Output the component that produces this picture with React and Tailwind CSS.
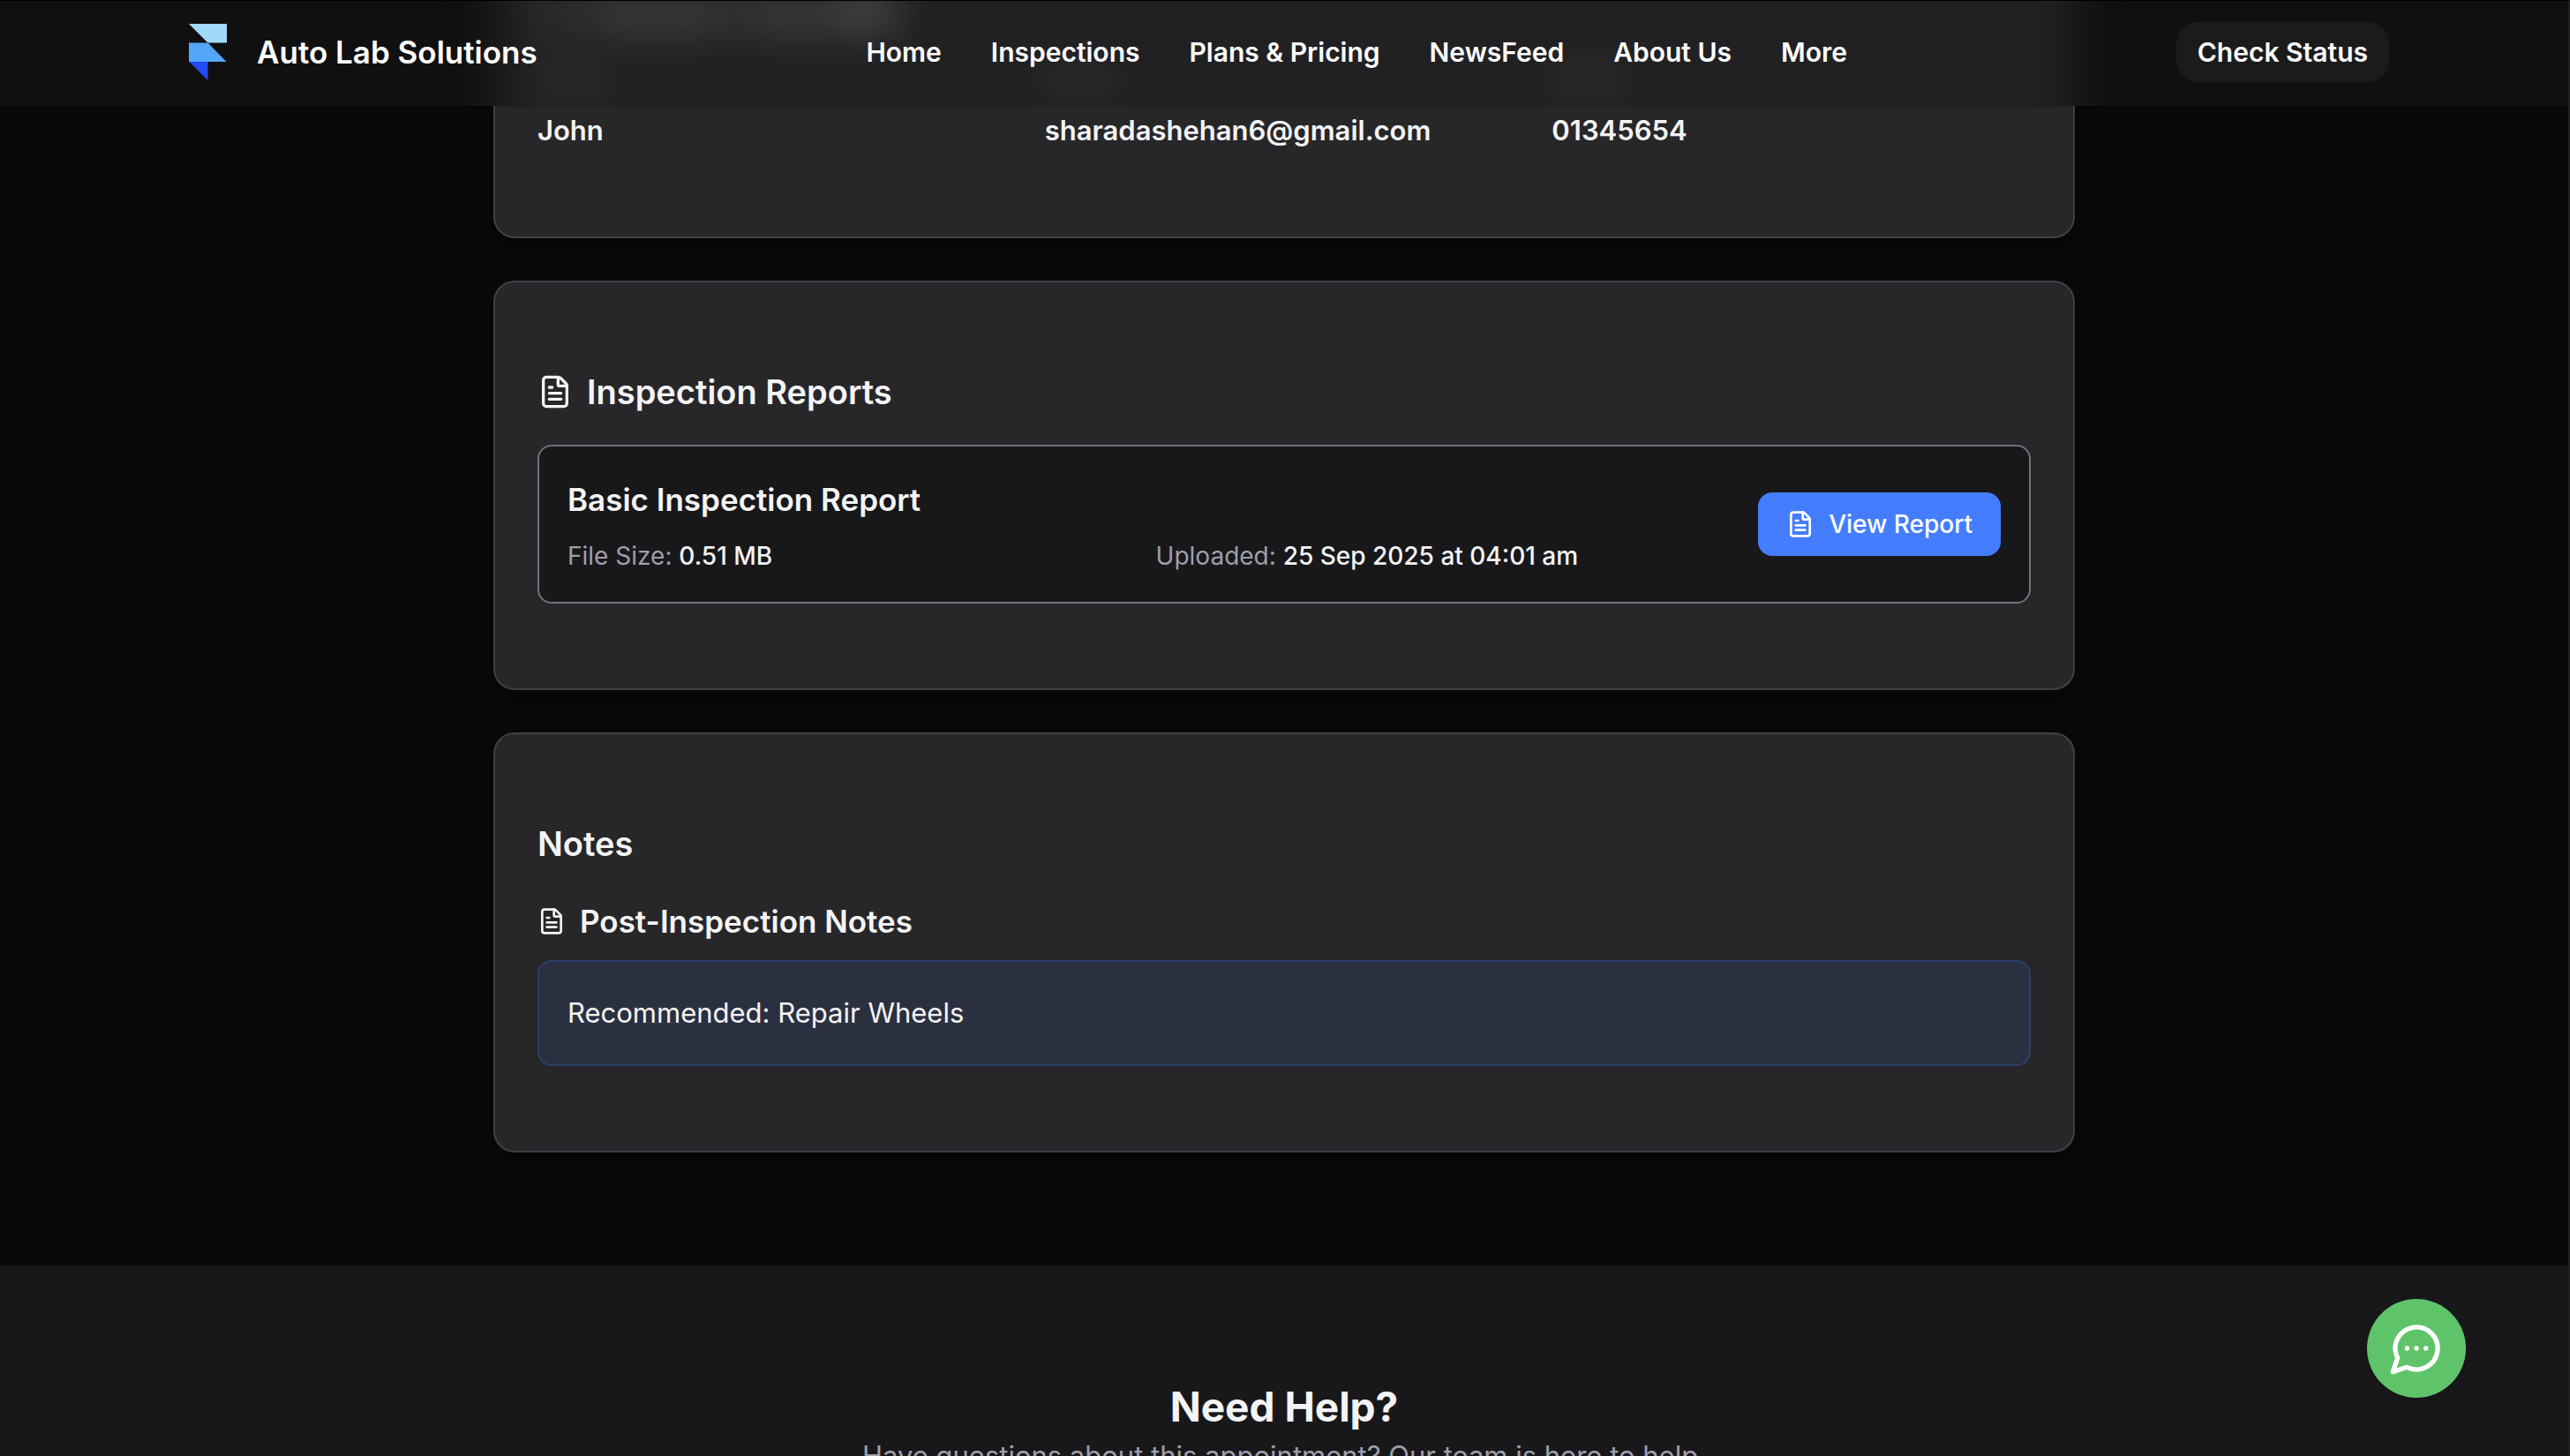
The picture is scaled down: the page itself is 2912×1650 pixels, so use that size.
import { FileText } from "lucide-react";

const NAV = ["Home", "Inspections", "Plans & Pricing", "NewsFeed", "About Us", "More"];

const CONTACT = ["John", "sharadashehan6@gmail.com", "01345654"];

function Logo() {
  return (
    <svg viewBox="0 0 43 64" className="h-16 w-[43px]" aria-hidden="true">
      <path d="M0 0H43V21.5H21.5Z" fill="#a0dafb" />
      <path d="M0 21.5H21.5L42.5 43H0Z" fill="#54a6f9" />
      <path d="M0.5 43H21.5V64Z" fill="#204bf6" />
    </svg>
  );
}

function ChatIcon() {
  return (
    <svg
      viewBox="0 0 24 24"
      className="size-16"
      fill="none"
      stroke="currentColor"
      strokeWidth="2"
      strokeLinecap="round"
      strokeLinejoin="round"
      aria-hidden="true"
    >
      <path d="M7.9 20A9 9 0 1 0 4 16.1L2 22Z" />
      <path d="M8 12h.01" />
      <path d="M12 12h.01" />
      <path d="M16 12h.01" />
    </svg>
  );
}

/* Frosted glass: soft shapes of the card that has scrolled beneath the bar. */
function Frost() {
  return (
    <div className="absolute inset-0 overflow-hidden" aria-hidden="true">
      <div className="absolute -inset-y-24 left-1/2 w-full max-w-[1792px] -translate-x-1/2 bg-[#212123] blur-xl" />
      <div className="absolute inset-0 mx-auto max-w-[1792px]">
        <div className="absolute top-0 left-[50px] h-8 w-10 bg-white/12 blur-xl" />
        <div className="absolute top-0 left-[106px] h-8 w-40 bg-white/17 blur-xl" />
        <div className="absolute top-0 left-[280px] h-8 w-44 bg-white/17 blur-xl" />
        <div className="absolute -top-2 left-[400px] h-8 w-14 bg-white/10 blur-xl" />
        <div className="absolute top-[76px] left-[50px] h-6 w-20 bg-white/8 blur-xl" />
        <div className="absolute top-[76px] left-[625px] h-6 w-20 bg-white/8 blur-xl" />
        <div className="absolute top-[76px] left-[1200px] h-6 w-20 bg-white/8 blur-xl" />
      </div>
    </div>
  );
}

function Header() {
  return (
    <header className="absolute inset-x-0 top-0 z-20 h-[119px] bg-[#101010] pb-1 shadow-sm">
      <Frost />
      <div className="relative mx-auto flex h-full w-full max-w-[2504px] items-center justify-between">
        <a href="#" className="flex items-center gap-[34px] pl-[11px]">
          <Logo />
          <span className="text-[35px] leading-10 font-semibold text-white">Auto Lab Solutions</span>
        </a>
        <nav className="flex items-center gap-14">
          {NAV.map((item) => (
            <a key={item} href="#" className="text-[30px] leading-12 font-semibold text-white">
              {item}
            </a>
          ))}
        </nav>
        <a
          href="#"
          className="rounded-3xl bg-[#1b1b1c] px-6 py-[10px] text-[30px] leading-12 font-semibold text-white"
        >
          Check Status
        </a>
      </div>
    </header>
  );
}

function Card({ children }) {
  return (
    <section className="rounded-3xl border-2 border-[#3f3f46] bg-[#27272a] px-12 py-24 shadow-[0_20px_30px_-6px_rgba(0,0,0,0.3),0_8px_12px_-8px_rgba(0,0,0,0.3)]">
      {children}
    </section>
  );
}

function CardTitle({ icon, children }) {
  return (
    <h2 className="mb-8 flex items-center gap-4 text-[38px] leading-14 font-semibold text-zinc-100">
      {icon}
      {children}
    </h2>
  );
}

export default function App() {
  return (
    <div className="relative h-screen overflow-hidden border-t border-r-2 border-t-black border-r-[#1f1f1c] bg-[#09090b] font-['Inter',sans-serif]">
      <Header />

      <main className="mx-auto flex max-w-[1792px] flex-col gap-12 pt-[25px] pb-32">
        <Card>
          <ul className="grid grid-cols-3 gap-8">
            {CONTACT.map((value) => (
              <li key={value} className="text-[31px] leading-12 font-semibold text-zinc-100">
                {value}
              </li>
            ))}
          </ul>
        </Card>

        <Card>
          <CardTitle icon={<FileText className="size-10" />}>Inspection Reports</CardTitle>
          <article className="flex items-center gap-12 rounded-2xl border-2 border-[#71717b] bg-[#18181b] p-8">
            <div className="flex-1">
              <h3 className="mb-4 text-[35px] leading-14 font-semibold text-zinc-100">Basic Inspection Report</h3>
              <div className="grid grid-cols-2 gap-8 text-[28px] leading-10 text-[#9f9fa9]">
                <p>
                  File Size: <span className="font-medium text-zinc-100">0.51 MB</span>
                </p>
                <p>
                  Uploaded: <span className="font-medium text-zinc-100">25 Sep 2025 at 04:01 am</span>
                </p>
              </div>
            </div>
            <button
              type="button"
              className="flex items-center gap-4 rounded-2xl bg-[#447dff] px-8 py-4 text-[28px] leading-10 font-medium text-white"
            >
              <FileText className="size-8" />
              View Report
            </button>
          </article>
        </Card>

        <Card>
          <CardTitle>Notes</CardTitle>
          <h3 className="mb-4 flex items-center gap-4 text-[35px] leading-14 font-semibold text-zinc-100">
            <FileText className="size-8" />
            Post-Inspection Notes
          </h3>
          <p className="rounded-2xl border-2 border-[#2b4069] bg-[#2b3040] p-8 text-[31px] leading-13 text-zinc-100">
            Recommended: Repair Wheels
          </p>
        </Card>
      </main>

      <section className="bg-[#18181b] py-32 text-center">
        <h2 className="text-[46px] leading-16 font-bold text-zinc-100">Need Help?</h2>
        <p className="text-[31px] leading-12 text-[#9f9fa9]">
          Have questions about this appointment? Our team is here to help.
        </p>
      </section>

      <button
        type="button"
        aria-label="Open chat"
        className="absolute right-[116px] bottom-[66px] z-10 flex size-28 items-center justify-center rounded-full bg-[#5fc36a] text-white shadow-lg"
      >
        <ChatIcon />
      </button>
    </div>
  );
}
